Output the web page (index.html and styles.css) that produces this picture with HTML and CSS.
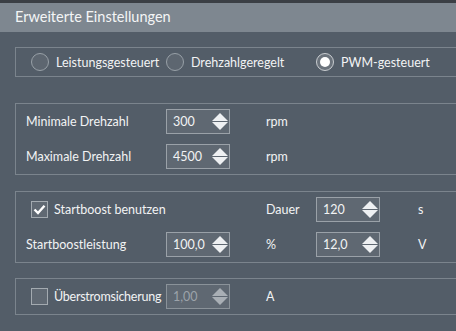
FILE: index.html
```html
<!DOCTYPE html>
<html lang="de">
<head>
<meta charset="utf-8">
<title>Erweiterte Einstellungen</title>
<link rel="stylesheet" href="styles.css">
</head>
<body>
<div class="window">
  <div class="topstrip"></div>
  <div class="titlebar">Erweiterte Einstellungen</div>
  <div class="content">
    <div class="group radios">
      <label class="radio r1"><span class="dot"></span>Leistungsgesteuert</label>
      <label class="radio r2"><span class="dot"></span>Drehzahlgeregelt</label>
      <label class="radio r3 on"><span class="dot"></span>PWM-gesteuert</label>
    </div>

    <div class="group grid g2">
      <div class="label">Minimale Drehzahl</div>
      <div class="spin"><span class="val">300</span><span class="arrows"><i class="up"></i><i class="down"></i></span></div>
      <div class="unit">rpm</div>
      <div class="label">Maximale Drehzahl</div>
      <div class="spin"><span class="val">4500</span><span class="arrows"><i class="up"></i><i class="down"></i></span></div>
      <div class="unit">rpm</div>
    </div>

    <div class="group grid g3">
      <div class="label check-label"><span class="check on"><svg viewBox="0 0 17 17" width="17" height="17"><path d="M3.5 8.5 L7 12 L13.5 4.8" fill="none" stroke="#ffffff" stroke-width="2.4"/></svg></span>Startboost benutzen</div>
      <div></div>
      <div class="unit">Dauer</div>
      <div class="spin"><span class="val">120</span><span class="arrows"><i class="up"></i><i class="down"></i></span></div>
      <div class="unit2">s</div>
      <div class="label">Startboostleistung</div>
      <div class="spin"><span class="val">100,0</span><span class="arrows"><i class="up"></i><i class="down"></i></span></div>
      <div class="unit">%</div>
      <div class="spin"><span class="val">12,0</span><span class="arrows"><i class="up"></i><i class="down"></i></span></div>
      <div class="unit2">V</div>
    </div>

    <div class="group grid g4">
      <div class="label check-label"><span class="check"></span><span class="tight">Überstromsicherung</span></div>
      <div class="spin disabled"><span class="val">1,00</span><span class="arrows"><i class="up"></i><i class="down"></i></span></div>
      <div class="unit">A</div>
    </div>
  </div>
</div>
</body>
</html>
```
FILE: styles.css
```css
html, body {
  margin: 0;
  padding: 0;
  background: #535d68;
  overflow: hidden;
}
body {
  font-family: Lato, "Noto Sans", sans-serif;
  font-size: 12.5px;
  color: #f2f3f4;
}
.window {
  width: 456px;
  height: 331px;
  background: #535d68;
  overflow: hidden;
}
.topstrip {
  height: 3px;
  background: #3b3f45;
}
.titlebar {
  height: 29px;
  background: #7e8790;
  color: #f4f5f6;
  font-size: 14.5px;
  line-height: 28px;
  padding-left: 15px;
}
.content {
  padding: 15px 0 0 15px;
}
.group {
  border: 1px solid #7b848d;
  border-right: none;
  box-sizing: border-box;
  width: 441px;
}
.radios {
  height: 30px;
  display: flex;
  align-items: center;
}
.radio {
  display: flex;
  align-items: center;
  flex: none;
}
.r1 { margin-left: 15px; width: 135px; }
.r2 { width: 150px; }
.dot {
  width: 16px;
  height: 16px;
  border-radius: 50%;
  border: 1px solid #98a0a7;
  background: #5d6670;
  margin-right: 7px;
  position: relative;
  flex: none;
}
.on .dot {
  border-color: #c9cdd1;
  background: #6b737c;
}
.on .dot::after {
  content: "";
  position: absolute;
  left: 3px;
  top: 3px;
  width: 10px;
  height: 10px;
  border-radius: 50%;
  background: #ffffff;
}
.grid {
  display: grid;
  grid-template-columns: 140px 64px 86px 64px auto;
  grid-auto-rows: 25px;
  row-gap: 10px;
  padding: 5px 0 5px 10px;
  align-items: center;
}
.label { grid-column: 1; white-space: nowrap; }
.g2 { margin-top: 26px; }
.g3 { margin-top: 16px; }
.g4 { margin-top: 15px; }
.unit { padding-left: 36px; }
.unit2 { padding-left: 38px; }
.check-label {
  display: flex;
  align-items: center;
  padding-left: 5px;
}
.tight { letter-spacing: -0.25px; }
.check {
  width: 17px;
  height: 17px;
  box-sizing: border-box;
  border: 1px solid #a3aab0;
  background: #606973;
  margin-right: 6px;
  position: relative;
  flex: none;
}
.check svg {
  position: absolute;
  left: -1px;
  top: -1px;
}
.spin {
  height: 25px;
  box-sizing: border-box;
  border: 1px solid #9aa1a8;
  background: #5f6872;
  display: flex;
  align-items: center;
  justify-content: space-between;
  padding: 0 1px 0 6px;
}
.arrows {
  display: flex;
  flex-direction: column;
  gap: 1px;
}
.arrows i {
  display: block;
  width: 0;
  height: 0;
  border-left: 8px solid transparent;
  border-right: 8px solid transparent;
}
.arrows .up { border-bottom: 8px solid #eef0f2; }
.arrows .down { border-top: 8px solid #eef0f2; }
.spin.disabled { border-color: #8a9299; }
.spin.disabled .val { color: #9ca3aa; }
.spin.disabled .up { border-bottom-color: #a9afb5; }
.spin.disabled .down { border-top-color: #a9afb5; }
```
